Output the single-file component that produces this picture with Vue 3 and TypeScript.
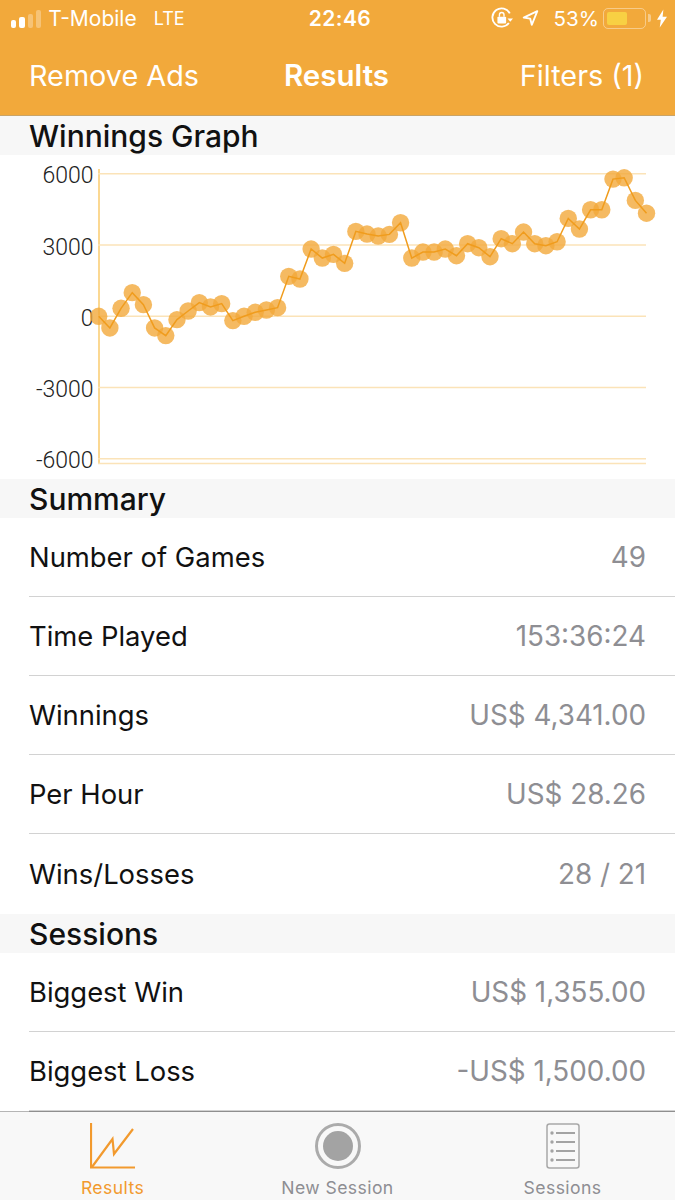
<template>
  <div class="screen">
    <header class="top">
      <div class="status">
        <div class="status-left">
          <span class="signal">
            <i class="on" style="height: 8px"></i>
            <i class="on" style="height: 11px"></i>
            <i style="height: 14px"></i>
            <i style="height: 18px"></i>
          </span>
          <span class="carrier">T-Mobile</span>
          <span class="network">LTE</span>
        </div>
        <span class="clock">22:46</span>
        <div class="status-right">
          <svg class="lock" width="22" height="22" viewBox="0 0 24 24">
            <path d="M19.500 17.500A10 10 0 1 1 20.500 7" fill="none" stroke="#fff" stroke-width="2" />
            <path d="M18 12.500h6l-3 3.600z" fill="#fff" />
            <rect x="7" y="10.500" width="9.500" height="7.500" rx="1" fill="#fff" />
            <path d="M9.200 10.500V8.500a2.500 2.500 0 0 1 5 0v2" fill="none" stroke="#fff" stroke-width="1.500" />
          </svg>
          <svg class="arrow" width="17" height="18" viewBox="0 0 20 20">
            <path d="M18 2 2 9.500l7.600 1.200L11.500 18z" fill="none" stroke="#fff" stroke-width="2.200" stroke-linejoin="round" />
          </svg>
          <span class="percent">53%</span>
          <span class="battery"><i></i></span>
          <span class="battery-cap"></span>
          <svg class="bolt" width="10" height="19" viewBox="0 0 11 20">
            <path d="M7 0 0 11.500h4.200L3 20l8-12H6.200z" fill="#fff" />
          </svg>
        </div>
      </div>
      <nav class="nav">
        <span>Remove Ads</span>
        <strong>Results</strong>
        <span>Filters (1)</span>
      </nav>
    </header>

    <h2 class="section">Winnings Graph</h2>
    <div class="chart">
      <svg width="675" height="324" viewBox="0 0 675 324">
        <line x1="99" y1="14" x2="99" y2="309" class="axis" />
        <line x1="98" y1="308.500" x2="646" y2="308.500" class="grid" />
        <g v-for="tick in ticks" :key="tick">
          <line x1="98" :y1="toY(tick)" x2="646" :y2="toY(tick)" class="grid" />
          <text x="93.500" :y="toY(tick) + 9.500" text-anchor="end" class="tick">{{ tick }}</text>
        </g>
        <circle v-for="(p, i) in points" :key="i" :cx="p.x" :cy="p.y" r="8.700" class="dot" />
        <polyline :points="linePoints" class="line" />
      </svg>
    </div>

    <h2 class="section">Summary</h2>
    <div v-for="row in summary" :key="row.label" class="row">
      <span>{{ row.label }}</span>
      <span class="value">{{ row.value }}</span>
    </div>

    <h2 class="section sessions">Sessions</h2>
    <div v-for="row in sessions" :key="row.label" class="row">
      <span>{{ row.label }}</span>
      <span class="value">{{ row.value }}</span>
    </div>

    <footer class="tabs">
      <div class="tab active">
        <svg width="46" height="46" viewBox="0 0 46 46">
          <path d="M1 0v44.500h44" fill="none" stroke="#f29a2e" stroke-width="2.200" />
          <path d="M2 44 22.500 16l1.500 15L43 6" fill="none" stroke="#f29a2e" stroke-width="2.200" />
        </svg>
        <span>Results</span>
      </div>
      <div class="tab">
        <svg width="46" height="46" viewBox="0 0 46 46">
          <circle cx="23" cy="23" r="21.500" fill="none" stroke="#ababab" stroke-width="3" />
          <circle cx="23" cy="23" r="15" fill="#a3a3a3" />
        </svg>
        <span>New Session</span>
      </div>
      <div class="tab">
        <svg width="34" height="46" viewBox="0 0 34 46">
          <rect x="1" y="1" width="32" height="44" rx="2.500" fill="none" stroke="#a8a8a8" stroke-width="1.500" />
          <g v-for="y in [10, 19, 28, 37]" :key="y">
            <circle cx="6" :cy="y" r="1.700" fill="#a3a3a3" />
            <line x1="10" :y1="y" x2="29" :y2="y" stroke="#a3a3a3" stroke-width="2" />
          </g>
        </svg>
        <span>Sessions</span>
      </div>
    </footer>
  </div>
</template>

<script setup lang="ts">
import { computed } from 'vue';

const ticks = [6000, 3000, 0, -3000, -6000];

const winnings = [
  0, -490, 336, 995, 490, -490, -813, -140, 224, 575, 393, 533, -182, 0, 168, 266, 365,
  1682, 1570, 2832, 2453, 2608, 2229, 3575, 3463, 3379, 3449, 3940, 2453, 2706, 2706,
  2832, 2552, 3056, 2888, 2510, 3267, 3056, 3547, 3056, 2972, 3140, 4122, 3673, 4486,
  4486, 5776, 5832, 4879, 4341,
];

const toY = (value: number) => 161.3 - (value / 6000) * 142.5;

const points = computed(() =>
  winnings.map((value, i) => ({ x: 98.7 + i * 11.18, y: toY(value) })),
);

const linePoints = computed(() => points.value.map((p) => `${p.x},${p.y}`).join(' '));

const summary = [
  { label: 'Number of Games', value: '49' },
  { label: 'Time Played', value: '153:36:24' },
  { label: 'Winnings', value: 'US$ 4,341.00' },
  { label: 'Per Hour', value: 'US$ 28.26' },
  { label: 'Wins/Losses', value: '28 / 21' },
];

const sessions = [
  { label: 'Biggest Win', value: 'US$ 1,355.00' },
  { label: 'Biggest Loss', value: '-US$ 1,500.00' },
];
</script>

<style>
html,
body {
  margin: 0;
  background: #fff;
}
</style>

<style scoped>
.screen {
  position: relative;
  width: 675px;
  height: 1200px;
  overflow: hidden;
  background: #fff;
  font-family: Inter, "Liberation Sans", sans-serif;
  color: #111;
}

.top {
  height: 116px;
  box-sizing: border-box;
  border-bottom: 1px solid #c9a468;
  background: #f2a93b;
  color: #fff;
}

.status {
  display: grid;
  grid-template-columns: 1fr auto 1fr;
  align-items: center;
  height: 36px;
  padding: 0 8px 0 13px;
}

.status-left,
.status-right {
  display: flex;
  align-items: center;
}

.status-left {
  margin-left: -2px;
}

.status-right {
  justify-content: flex-end;
}

.signal {
  display: flex;
  align-items: flex-end;
  gap: 3px;
  height: 18px;
  margin-top: 1px;
  margin-right: 7px;
}

.signal i {
  width: 5.300px;
  border-radius: 2px;
  background: rgba(255, 255, 255, 0.3);
}

.signal i.on {
  background: #fff;
}

.carrier {
  font-size: 21px;
  margin-right: 17px;
}

.network {
  font-size: 18px;
}

.clock {
  font-size: 21px;
  font-weight: 600;
  letter-spacing: 0.400px;
}

.lock {
  margin-right: 9px;
}

.arrow {
  margin-right: 15px;
}

.percent {
  font-size: 20.600px;
  margin-right: 4px;
}

.battery {
  display: block;
  box-sizing: border-box;
  width: 43px;
  height: 21px;
  padding: 3px;
  border: 1.500px solid rgba(255, 255, 255, 0.4);
  border-radius: 5px;
}

.battery i {
  display: block;
  width: 57%;
  height: 100%;
  border-radius: 2px;
  background: #f8d043;
}

.battery-cap {
  width: 3px;
  height: 8px;
  margin: 0 6px 0 2px;
  border-radius: 0 2px 2px 0;
  background: rgba(255, 255, 255, 0.4);
}

.nav {
  display: grid;
  grid-template-columns: 1fr auto 1fr;
  align-items: center;
  height: 78px;
  padding: 0 31px 0 29px;
  font-size: 28.800px;
}

.nav span:last-child {
  text-align: right;
}

.nav strong {
  font-size: 29.500px;
  font-weight: 600;
}

.section {
  height: 39px;
  margin: 0;
  padding-left: 29px;
  background: #f7f7f7;
  font-size: 30px;
  font-weight: 500;
  line-height: 41px;
  overflow: hidden;
}

.chart {
  height: 324px;
}

.chart svg {
  display: block;
}

.axis {
  stroke: #fbd892;
  stroke-width: 2;
}

.grid {
  stroke: #fbe3b8;
  stroke-width: 1.500;
}

.tick {
  fill: #222;
  font-family: Roboto, "Liberation Sans", sans-serif;
  font-size: 23px;
  font-weight: 300;
}

.dot {
  fill: #f2a93b;
  fill-opacity: 0.8;
}

.line {
  fill: none;
  stroke: #f09c1d;
  stroke-width: 1.500;
}

.row {
  display: flex;
  justify-content: space-between;
  align-items: center;
  box-sizing: border-box;
  height: 79px;
  margin-left: 29px;
  padding-right: 29px;
  border-bottom: 1px solid #d2d2d2;
  font-size: 27.400px;
}

.row:has(+ .section) {
  border-bottom: 0;
}

.value {
  font-size: 27.800px;
  color: #8e8e93;
}

.sessions {
  margin-top: 1px;
}

.tabs {
  position: absolute;
  left: 0;
  right: 0;
  bottom: 0;
  display: grid;
  grid-template-columns: repeat(3, 1fr);
  box-sizing: border-box;
  height: 89px;
  border-top: 1px solid #8f8f8f;
  background: #f8f8f8;
}

.tabs::before {
  content: "";
  position: absolute;
  top: -1px;
  left: 0;
  width: 29px;
  height: 1px;
  background: #b5b5b5;
}

.tab {
  display: flex;
  flex-direction: column;
  align-items: center;
  padding-top: 11px;
  color: #8e8e93;
  font-size: 17.600px;
  letter-spacing: 0.400px;
}

.tab svg {
  display: block;
  margin-bottom: 8px;
}

.tab.active {
  color: #f29a2e;
}
</style>
